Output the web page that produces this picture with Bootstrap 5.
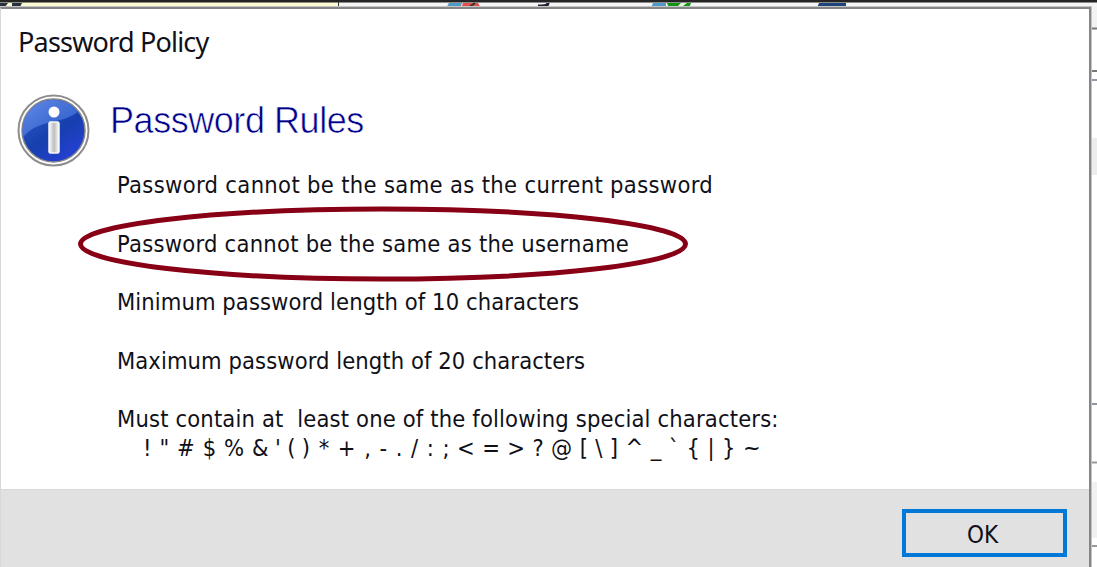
<!DOCTYPE html>
<html lang="en">
<head>
  <meta charset="UTF-8">
  <meta name="viewport" content="width=device-width, initial-scale=1.0">
  <title>Password Policy</title>
  <link href="https://cdn.jsdelivr.net/npm/bootstrap@5.3.3/dist/css/bootstrap.min.css" rel="stylesheet">
  <script src="https://cdn.jsdelivr.net/npm/bootstrap@5.3.3/dist/js/bootstrap.bundle.min.js" defer></script>
  <style>
    body {
      background-color: #fff;
      color: #101018;
      font-family: "DejaVu Sans Condensed", "DejaVu Sans", sans-serif;
      font-size: 23.5px;
    }
    .window-strip {
      height: 7px;
    }
    .window-strip svg,
    .side-strip svg {
      display: block;
    }
    .policy-dialog {
      width: 1091px;
      border-top: 2px solid #858585;
      border-right: 2px solid #858585;
      border-left: 1px solid #d8d8d8;
      box-shadow: 0 0 0 1px #c4c4c4;
    }
    .dialog-title {
      height: 69px;
      padding: 13px 0 0 17px;
      font-family: "Noto Sans", sans-serif;
      font-size: 27px;
      line-height: 40px;
    }
    .dialog-title span {
      letter-spacing: -0.8px;
    }
    .rules-body {
      height: 411px;
      padding: 16px 0 0 16px;
    }
    .rules-heading {
      margin: 0 0 0 -7px;
      height: 77px;
      font-family: "Liberation Sans", sans-serif;
      font-size: 36px;
      font-weight: 400;
      line-height: 54px;
      letter-spacing: -0.45px;
      color: #00008b;
      -webkit-text-stroke: 0.6px #fff;
    }
    .rules-text {
      margin-left: 26px;
    }
    .rules-list {
      padding-left: 0;
    }
    .rules-list li {
      height: 58.5px;
      line-height: 29px;
    }
    .track-wide { letter-spacing: 0.34px; }
    .track-mid { letter-spacing: 0.25px; }
    .track-low { letter-spacing: 0.16px; }
    .track-min { letter-spacing: 0.08px; }
    .rule-circle {
      left: -40px;
      top: -24px;
    }
    .special-chars {
      padding-left: 26px;
      word-spacing: 1.2px;
    }
    .chars-tight { word-spacing: -0.3px; }
    .chars-loose { word-spacing: 1.9px; }
    .chars-even { word-spacing: 0.7px; }
    .dialog-footer {
      height: 78px;
      background-color: #e1e1e1;
      border-top: 1px solid #d9d9d9;
      padding: 19px 22px 0 0;
    }
    .btn-ok {
      width: 165px;
      height: 48px;
      border: 4px solid #0078d7;
      border-radius: 0;
      background-color: #e1e1e1;
      color: #101018;
      font-size: 24px;
      line-height: 1;
      padding: 3px 4px 0 0;
    }
  </style>
</head>
<body class="vh-100 overflow-hidden d-flex flex-column">
  <!-- Parent window toolbar, almost hidden behind the dialog -->
  <div class="window-strip flex-shrink-0">
    <svg width="1097" height="9" viewBox="0 0 1097 9">
      <rect width="1097" height="9" fill="#f4f5f4"/>
      <rect width="338" height="9" fill="#fdfbd2"/>
      <rect width="1097" height="2.5" fill="#242424"/>
      <path d="M0 3h8l-3 4H0zM12 3h10l-2 4h-8z" fill="#28323e"/>
      <path d="M338.500 2v6" stroke="#333"/>
      <path d="M449 3h13l-2 5H446z" fill="#4f9ac6"/>
      <path d="M463 3h15l3 5h-20z" fill="#e4514a"/>
      <path d="M475 3l-7 5" stroke="#333" stroke-width="2"/>
      <path d="M548 3c0 3-4 3-10 3" fill="none" stroke="#1c2230" stroke-width="3"/>
      <path d="M653 3h13v5h-15z" fill="#4f9ac6"/>
      <path d="M667 3h24l-2 5h-20z" fill="#109610"/>
      <path d="M681 3h6l-4 3h-5z" fill="#e8ffe0"/>
      <path d="M819 3h27v5h-29z" fill="#1d4579"/>
    </svg>
  </div>

  <div class="d-flex flex-grow-1">
    <div class="policy-dialog flex-shrink-0 bg-white position-relative">
      <div class="dialog-title"><span>Password Policy</span></div>

      <div class="rules-body d-flex">
        <svg class="flex-shrink-0" width="74" height="74" viewBox="0 0 74 74">
          <defs>
            <linearGradient id="ball" x1="0" y1="0" x2=".7" y2="1">
              <stop offset="0" stop-color="#2d60cd"/>
              <stop offset=".6" stop-color="#173fae"/>
              <stop offset="1" stop-color="#2440d4"/>
            </linearGradient>
            <linearGradient id="gloss" x1="0" y1="0" x2="1" y2="1">
              <stop offset="0" stop-color="#6289e6"/>
              <stop offset="1" stop-color="#2457c6"/>
            </linearGradient>
            <linearGradient id="stem" x1="0" y1="0" x2="1" y2="0">
              <stop offset="0" stop-color="#fff"/>
              <stop offset=".5" stop-color="#bcbcbc"/>
              <stop offset="1" stop-color="#fff"/>
            </linearGradient>
          </defs>
          <circle cx="36.500" cy="36.500" r="35" fill="#fff" stroke="#8d8d8d" stroke-width="2"/>
          <circle cx="36.500" cy="36.500" r="31.500" fill="url(#ball)" stroke="#85858a" stroke-width="1.500"/>
          <path d="M6 43A31 31 0 0 1 61 18Q52 25 34 28Q15 32 6 43z" fill="url(#gloss)"/>
          <circle cx="37" cy="18" r="5.500" fill="#fff"/>
          <rect x="32" y="28" width="10" height="31" rx="1.500" fill="url(#stem)" stroke="#f6f6f6" stroke-width="1.500"/>
        </svg>

        <div class="rules-text">
          <h1 class="rules-heading"><span>Password Rules</span></h1>
          <ul class="rules-list list-unstyled mb-0 text-nowrap">
            <li><span class="track-wide">Password cannot be the same as the current password</span></li>
            <li class="position-relative">
              <span class="track-mid">Password cannot be the same as the username</span>
              <svg class="rule-circle position-absolute" width="612" height="78" viewBox="0 0 612 78">
                <ellipse cx="306" cy="38" rx="302.500" ry="35" fill="none" stroke="#880015" stroke-width="5"/>
              </svg>
            </li>
            <li><span class="track-min">Minimum password length of 10 characters</span></li>
            <li><span class="track-min">Maximum password length of 20 characters</span></li>
            <li>
              <div class="track-low">Must contain at&nbsp; least one of the following special characters:</div>
              <div class="special-chars">! " # $ % &amp;<span class="chars-tight"> ' ( )</span><span class="chars-loose"> * + , - . / : ;</span><span class="chars-even"> &lt; = &gt; ? @ [ \ ] ^ _ ` { | } ~</span></div>
            </li>
          </ul>
        </div>
      </div>

      <div class="dialog-footer d-flex justify-content-end">
        <button type="button" class="btn btn-ok">OK</button>
      </div>
    </div>

    <!-- Right edge of the parent window -->
    <div class="side-strip">
      <svg width="6" height="560" viewBox="0 0 6 560">
        <rect width="6" height="21" fill="#f3f3f3"/>
        <rect y="131" width="6" height="37" fill="#ededed"/>
        <rect y="475" width="6" height="56" fill="#f1f1f1"/>
        <path d="M0 21.500h6M0 64h6" stroke="#777" stroke-width="2"/>
        <path d="M0 73h6M0 397h6" stroke="#9095a0" stroke-width="2"/>
        <path d="M0 455.500h6M0 539h6" stroke="#999" stroke-width="2"/>
      </svg>
    </div>
  </div>
</body>
</html>
